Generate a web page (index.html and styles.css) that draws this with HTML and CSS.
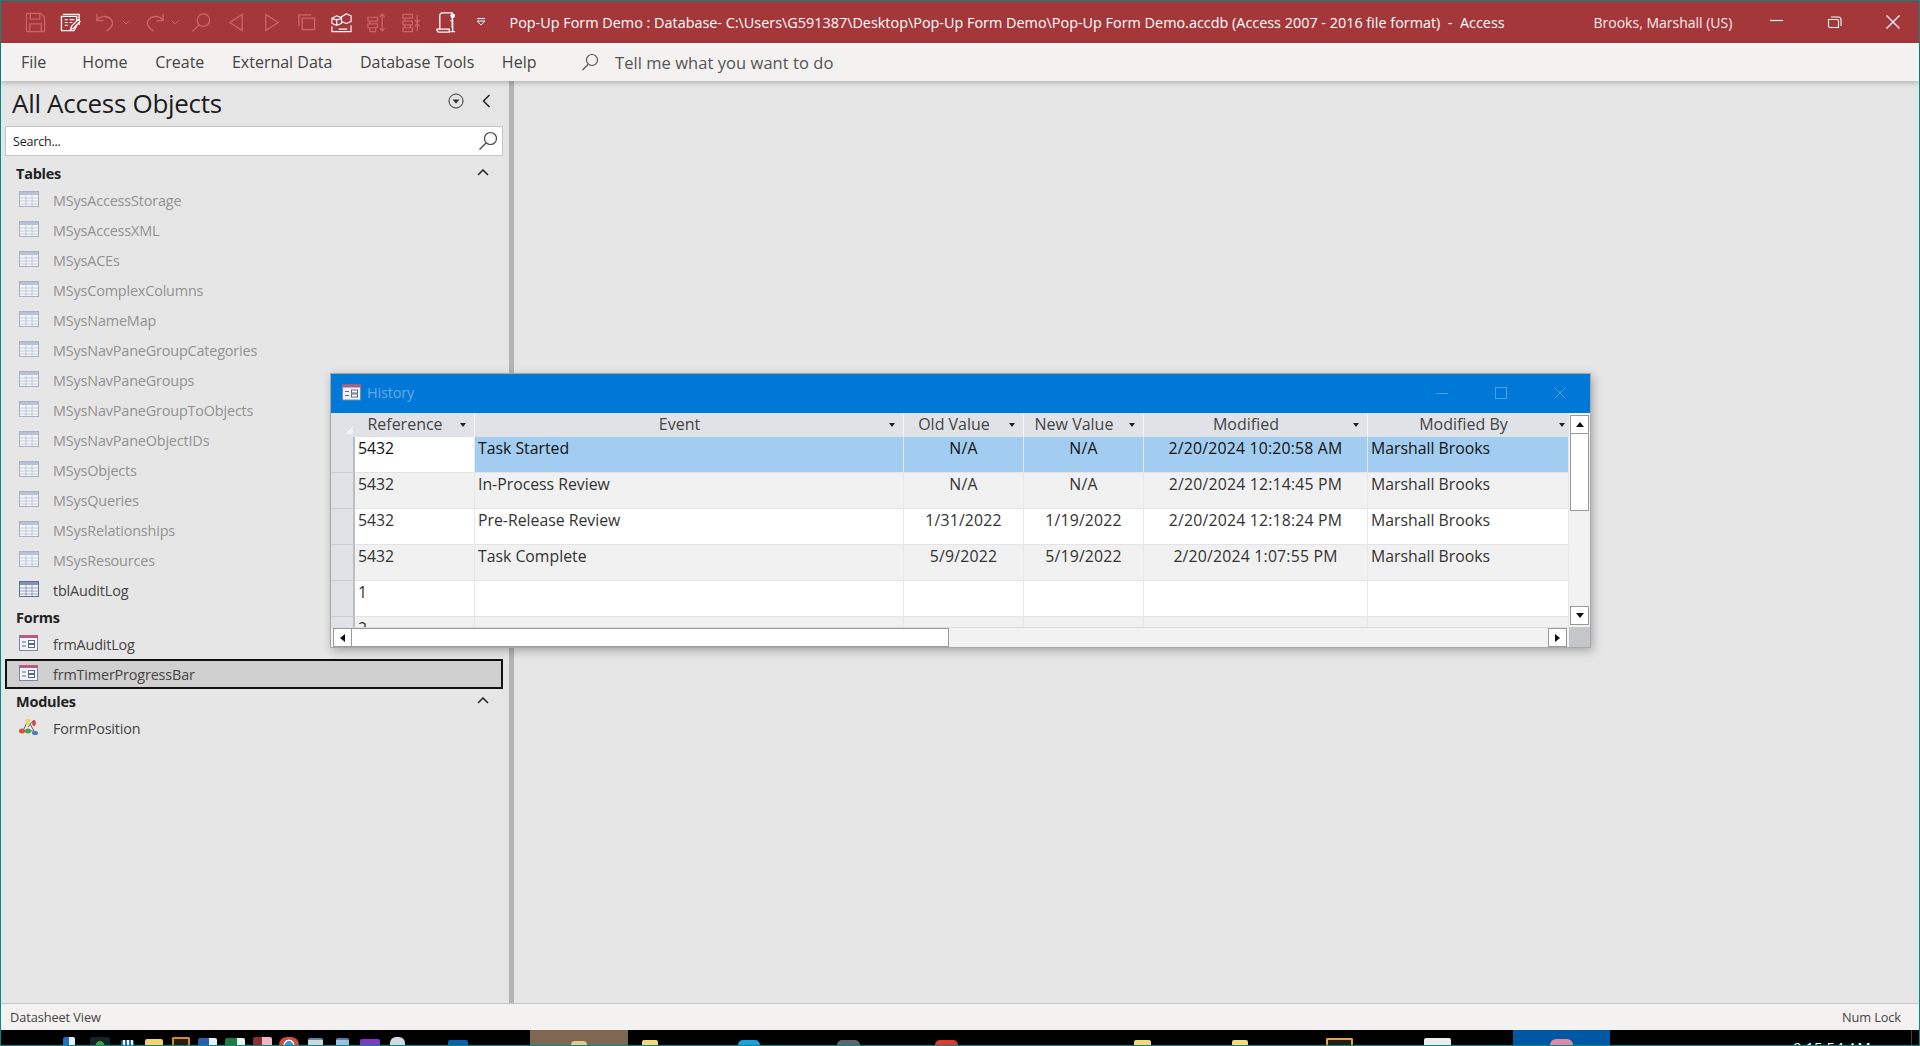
FILE: index.html
```html
<!DOCTYPE html>
<html lang="en">
<head>
<meta charset="utf-8">
<title>Access</title>
<link rel="stylesheet" href="styles.css">
</head>
<body>
<svg class="defs" width="0" height="0" aria-hidden="true">
  <symbol id="tbl" viewBox="0 0 20 16">
    <rect x="0.5" y="0.5" width="19" height="15" fill="#f4f6fa" stroke="currentColor"/>
    <rect x="1" y="1" width="18" height="3" fill="currentColor" opacity=".75"/>
    <path d="M1 7h18M1 10h18M1 13h18M7 4v11M13 4v11" stroke="currentColor" stroke-width="1" opacity=".6" fill="none"/>
  </symbol>
  <symbol id="frm" viewBox="0 0 20 16">
    <rect x="0.5" y="0.5" width="18" height="15" fill="#f2f5fb" stroke="#7b86a8"/>
    <rect x="1" y="0" width="18" height="3" fill="#b65c7c"/>
    <path d="M3 7h4M3 11h4" stroke="#56688f" fill="none"/>
    <rect x="9.500" y="5.500" width="6" height="3" fill="#fff" stroke="#56688f"/>
    <rect x="9.500" y="9.500" width="6" height="3" fill="#fff" stroke="#56688f"/>
  </symbol>
</svg>
<div class="app">
  <header class="titlebar">
    <div class="qat">
      <svg class="q dim" viewBox="0 0 22 22"><path d="M1.500 1.500h15l4 4v15h-19zM5.500 1.500v6h10v-6M5 20.500v-8h12v8" fill="none" stroke="currentColor" stroke-width="1.300"/></svg>
      <svg class="q" viewBox="0 0 22 22"><path d="M3 2.500h17v11M1.500 4.500h16v10l-3 5h-13z" fill="none" stroke="currentColor" stroke-width="1.400"/><path d="M5 8h3M10 8h5M5 11h3M10 11h3M5 14h3" stroke="currentColor" stroke-width="1.300"/><path d="M11 18l1-3 7-7 2 2-7 7z" fill="#a4373a" stroke="currentColor" stroke-width="1.300"/></svg>
      <svg class="q dim" viewBox="0 0 22 22"><path d="M2 2v7h7M2 9c3-5 11-6 15-1 3 4 1 8-5 12" fill="none" stroke="currentColor" stroke-width="1.400"/></svg>
      <svg class="c c-undo dim" viewBox="0 0 8 5"><path d="M.5.500l3.500 3.500L7.500.500" fill="none" stroke="currentColor"/></svg>
      <svg class="q dim" viewBox="0 0 22 22"><path d="M20 2v7h-7M20 9c-3-5-11-6-15-1-3 4-1 8 5 12" fill="none" stroke="currentColor" stroke-width="1.400"/></svg>
      <svg class="c c-redo dim" viewBox="0 0 8 5"><path d="M.5.500l3.500 3.500L7.500.500" fill="none" stroke="currentColor"/></svg>
      <svg class="q dim" viewBox="0 0 22 22"><circle cx="13" cy="8.500" r="6.500" fill="none" stroke="currentColor" stroke-width="1.400"/><path d="M8.500 13.500L1.500 20.500" stroke="currentColor" stroke-width="1.400"/></svg>
      <svg class="q dim" viewBox="0 0 22 22"><path d="M17 2.500v17L4 11z" fill="none" stroke="currentColor" stroke-width="1.400"/></svg>
      <svg class="q dim" viewBox="0 0 22 22"><path d="M5 2.500v17L18 11z" fill="none" stroke="currentColor" stroke-width="1.400"/></svg>
      <svg class="q dim" viewBox="0 0 22 22"><path d="M3 15V3h13M6.500 6.500h13v12h-13z" fill="none" stroke="currentColor" stroke-width="1.400"/></svg>
      <svg class="q" viewBox="0 0 22 22"><path d="M1 6.500l5-2.500 5 2v6l-5 2-5-2zM6 7v7M1 6.500l5 2 5-2M11 5l5-3 5 2v6l-5 2-5-2z" fill="none" stroke="currentColor" stroke-width="1.200"/><path d="M1 15v5.500h20V14M8 18h9" fill="none" stroke="currentColor" stroke-width="1.200"/></svg>
      <svg class="q dim" viewBox="0 0 22 22"><path d="M2 5.500h10v4H2zM4 9.500v3M2 12.500h10v4H2zM4 16.500v4h6v-4" fill="none" stroke="currentColor" stroke-width="1.300"/><path d="M17 2v18M14.500 5L17 2l2.500 3M14.500 17l2.500 3 2.500-3" fill="none" stroke="currentColor" stroke-width="1.300"/></svg>
      <svg class="q dim" viewBox="0 0 22 22"><path d="M2 2.500h10v4H2zM4 6.500v3M2 9.500h10v4H2zM4 13.500v3h6v-3M2 16.500h10v4H2z" fill="none" stroke="currentColor" stroke-width="1.300"/><path d="M17 3v8M14.500 8.500L17 11l2.500-2.500M17 12v8M14.500 15l2.500-3 2.500 3" fill="none" stroke="currentColor" stroke-width="1.300"/></svg>
      <svg class="q" viewBox="0 0 22 22"><path d="M4 18V3.500C4 2 5 1 6.500 1H17v16M1 18h13v3H3c-1 0-2-1-2-3z" fill="none" stroke="currentColor" stroke-width="1.400"/><circle cx="17.500" cy="4" r="2.500" fill="#fff"/><path d="M17.500 8v12M15 20.500h5M15 9h3" stroke="currentColor" stroke-width="1.300" fill="none"/></svg>
      <svg class="cust" viewBox="0 0 10 8"><path d="M1 .5h8M1 3l4 4 4-4z" fill="none" stroke="currentColor"/></svg>
    </div>
    <div class="doc">Pop-Up Form Demo : Database- C:\Users\G591387\Desktop\Pop-Up Form Demo\Pop-Up Form Demo.accdb (Access 2007 - 2016 file format)&nbsp; -&nbsp; Access</div>
    <div class="user">Brooks, Marshall (US)</div>
    <div class="winbtns">
      <svg viewBox="0 0 14 14"><path d="M0 5.500h13" stroke="currentColor" stroke-width="1.200"/></svg>
      <svg viewBox="0 0 14 14"><path d="M.5 4.500h8.500c1 0 1.500.5 1.500 1.500v6.500H2c-1 0-1.500-.5-1.500-1.500zM3 2h7c2 0 3 1 3 3v6" fill="none" stroke="currentColor" stroke-width="1.100"/></svg>
      <svg viewBox="0 0 14 14"><path d="M.5.500l13 13M13.500.500l-13 13" stroke="currentColor" stroke-width="1.200"/></svg>
    </div>
  </header>
  <nav class="ribbon">
    <span class="tab tab-file">File</span>
    <span class="tab">Home</span>
    <span class="tab">Create</span>
    <span class="tab">External Data</span>
    <span class="tab">Database Tools</span>
    <span class="tab">Help</span>
    <svg class="tell-ico" viewBox="0 0 18 18"><circle cx="11" cy="7" r="5.500" fill="none" stroke="currentColor" stroke-width="1.200"/><path d="M7 11.500L1.500 17" stroke="currentColor" stroke-width="1.200"/></svg>
    <span class="tell">Tell me what you want to do</span>
  </nav>
  <main class="work">
    <aside class="navpane">
      <div class="nav-head">
        <h1>All Access Objects</h1>
        <svg class="nav-drop" viewBox="0 0 16 16"><circle cx="8" cy="8" r="7" fill="none" stroke="currentColor"/><path d="M4.500 6.500h7L8 10.500z" fill="currentColor"/></svg>
        <svg class="nav-close" viewBox="0 0 9 14"><path d="M7.500 1L1.500 7l6 6" fill="none" stroke="currentColor" stroke-width="1.500"/></svg>
      </div>
      <div class="search">
        <span>Search...</span>
        <svg viewBox="0 0 20 20"><circle cx="12.500" cy="7.500" r="6" fill="none" stroke="currentColor" stroke-width="1.200"/><path d="M8 12L1.500 18.500" stroke="currentColor" stroke-width="1.200"/></svg>
      </div>
      <div class="group"><b>Tables</b><svg class="chev" viewBox="0 0 12 7"><path d="M1 6l5-5 5 5" fill="none" stroke="currentColor" stroke-width="1.500"/></svg></div>
      <ul class="items">
        <li class="sys"><svg class="ti"><use href="#tbl"/></svg>MSysAccessStorage</li>
        <li class="sys"><svg class="ti"><use href="#tbl"/></svg>MSysAccessXML</li>
        <li class="sys"><svg class="ti"><use href="#tbl"/></svg>MSysACEs</li>
        <li class="sys"><svg class="ti"><use href="#tbl"/></svg>MSysComplexColumns</li>
        <li class="sys"><svg class="ti"><use href="#tbl"/></svg>MSysNameMap</li>
        <li class="sys"><svg class="ti"><use href="#tbl"/></svg>MSysNavPaneGroupCategories</li>
        <li class="sys"><svg class="ti"><use href="#tbl"/></svg>MSysNavPaneGroups</li>
        <li class="sys"><svg class="ti"><use href="#tbl"/></svg>MSysNavPaneGroupToObjects</li>
        <li class="sys"><svg class="ti"><use href="#tbl"/></svg>MSysNavPaneObjectIDs</li>
        <li class="sys"><svg class="ti"><use href="#tbl"/></svg>MSysObjects</li>
        <li class="sys"><svg class="ti"><use href="#tbl"/></svg>MSysQueries</li>
        <li class="sys"><svg class="ti"><use href="#tbl"/></svg>MSysRelationships</li>
        <li class="sys"><svg class="ti"><use href="#tbl"/></svg>MSysResources</li>
        <li class="usr"><svg class="ti"><use href="#tbl"/></svg>tblAuditLog</li>
      </ul>
      <div class="group"><b>Forms</b></div>
      <ul class="items">
        <li><svg class="ti"><use href="#frm"/></svg>frmAuditLog</li>
        <li class="sel"><svg class="ti"><use href="#frm"/></svg>frmTimerProgressBar</li>
      </ul>
      <div class="group"><b>Modules</b><svg class="chev" viewBox="0 0 12 7"><path d="M1 6l5-5 5 5" fill="none" stroke="currentColor" stroke-width="1.500"/></svg></div>
      <ul class="items">
        <li><svg class="ti mod" viewBox="0 0 20 18"><path d="M8 4l-4 9M10 4l5 9M4 13h11M14 3l-5 6" stroke="#667" fill="none"/><ellipse cx="9" cy="3.500" rx="2.500" ry="3" fill="#e6d56a"/><ellipse cx="15" cy="5" rx="1.800" ry="3" fill="#cc4a3a"/><ellipse cx="3" cy="13" rx="3" ry="2.500" fill="#d9533c"/><ellipse cx="9" cy="13" rx="3" ry="2.500" fill="#4f9a55"/><ellipse cx="16" cy="15" rx="3" ry="2" fill="#4a78c4"/></svg>FormPosition</li>
      </ul>
    </aside>
    <div class="splitter"></div>
    <section class="canvas"></section>

    <div class="popup">
      <div class="pop-title">
        <svg class="pop-ico"><use href="#frm"/></svg>
        <span class="pop-name">History</span>
        <div class="pop-btns">
          <svg viewBox="0 0 14 14"><path d="M1 7.500h12" stroke="currentColor"/></svg>
          <svg viewBox="0 0 14 14"><rect x="1.500" y="1.500" width="11" height="11" fill="none" stroke="currentColor"/></svg>
          <svg viewBox="0 0 14 14"><path d="M1.500 1.500l11 11M12.500 1.500l-11 11" stroke="currentColor"/></svg>
        </div>
      </div>
      <div class="pop-body">
        <div class="sheet">
          <div class="grid">
            <div class="hd corner"><svg viewBox="0 0 12 11"><path d="M11 0L0 11h11z" fill="#eef1f5" stroke="#d3d8df"/></svg></div>
            <div class="hd"><span>Reference</span><i></i></div>
            <div class="hd"><span>Event</span><i></i></div>
            <div class="hd"><span>Old Value</span><i></i></div>
            <div class="hd"><span>New Value</span><i></i></div>
            <div class="hd"><span>Modified</span><i></i></div>
            <div class="hd hd-last"><span>Modified By</span><i></i></div>

            <div class="rs"></div><div class="cell ref cur">5432</div><div class="cell hi">Task Started</div><div class="cell hi ctr">N/A</div><div class="cell hi ctr">N/A</div><div class="cell hi ctr">2/20/2024 10:20:58 AM</div><div class="cell hi">Marshall Brooks</div>

            <div class="rs"></div><div class="cell ref alt">5432</div><div class="cell alt">In-Process Review</div><div class="cell alt ctr">N/A</div><div class="cell alt ctr">N/A</div><div class="cell alt ctr">2/20/2024 12:14:45 PM</div><div class="cell alt">Marshall Brooks</div>

            <div class="rs"></div><div class="cell ref">5432</div><div class="cell">Pre-Release Review</div><div class="cell ctr">1/31/2022</div><div class="cell ctr">1/19/2022</div><div class="cell ctr">2/20/2024 12:18:24 PM</div><div class="cell">Marshall Brooks</div>

            <div class="rs"></div><div class="cell ref alt">5432</div><div class="cell alt">Task Complete</div><div class="cell alt ctr">5/9/2022</div><div class="cell alt ctr">5/19/2022</div><div class="cell alt ctr">2/20/2024 1:07:55 PM</div><div class="cell alt">Marshall Brooks</div>

            <div class="rs"></div><div class="cell ref">1</div><div class="cell"></div><div class="cell"></div><div class="cell"></div><div class="cell"></div><div class="cell"></div>

            <div class="rs"></div><div class="cell ref alt">2</div><div class="cell alt"></div><div class="cell alt"></div><div class="cell alt"></div><div class="cell alt"></div><div class="cell alt"></div>
          </div>
        </div>
        <div class="vbar">
          <div class="sbtn"><em class="up"></em></div>
          <div class="vthumb"></div>
          <div class="vspace"></div>
          <div class="sbtn"><em class="down"></em></div>
        </div>
        <div class="hbar">
          <div class="sbtn"><em class="left"></em></div>
          <div class="hthumb"></div>
          <div class="hspace"></div>
          <div class="sbtn"><em class="right"></em></div>
        </div>
        <div class="sq"></div>
      </div>
    </div>
  </main>
  <footer class="status"><span>Datasheet View</span><span>Num Lock</span></footer>
  <div class="taskbar">
    <span class="tk tk-win"></span>
    <span class="tk tk-mongo"></span>
    <span class="tk tk-dots"></span>
    <span class="tk tk-folder"></span>
    <span class="tk tk-ppl"></span>
    <span class="tk tk-word"></span>
    <span class="tk tk-excel"></span>
    <span class="tk tk-acc"></span>
    <span class="tk tk-chrome"></span>
    <span class="tk tk-app1"></span>
    <span class="tk tk-app2"></span>
    <span class="tk tk-one"></span>
    <span class="tk tk-cyl"></span>
    <span class="tk tk-box"></span>
    <span class="active"><span class="tk tk-face"></span></span>
    <span class="tk tk-y1"></span>
    <span class="tk tk-edge"></span>
    <span class="tk tk-gray"></span>
    <span class="tk tk-red"></span>
    <span class="tk tk-y2"></span>
    <span class="tk tk-y3"></span>
    <span class="tk tk-org"></span>
    <span class="tk tk-white"></span>
    <span class="active blue"><span class="tk tk-pink"></span></span>
    <span class="clock">9:15:54 AM</span>
    <span class="tray-line"></span>
  </div>
</div>
</body>
</html>
```
FILE: styles.css
```css
* { box-sizing: border-box; }
html, body { margin: 0; height: 100%; overflow: hidden; }
body { font-family: "Open Sans", "Noto Sans", sans-serif; color: #222; }
.defs { position: absolute; }
.app {
  width: 1920px; height: 1046px; display: flex; flex-direction: column;
  border: 1px solid #008a8a; background: #e6e6e6;
}
.titlebar {
  height: 42px; flex: none; background: #a4373a; color: #fff;
  display: flex; align-items: center; padding-left: 23.500px;
}
.qat { display: flex; align-items: center; width: 485px; flex: none; color: #fff; }
.q { width: 21px; height: 21px; margin-right: 14px; flex: none; }
.c { width: 8px; height: 5px; margin-left: -8px; flex: none; }
.c-undo { margin-right: 14px; }
.c-redo { margin-right: 12px; }
.dim { color: #cf6468; }
.cust { width: 10px; height: 8px; margin-left: 5px; }
.doc { font-size: 14.400px; width: 1084px; flex: none; color: #fff; white-space: nowrap; }
.user { font-size: 14px; width: 170px; flex: none; white-space: nowrap; color: #fbeeee; }
.winbtns { display: flex; gap: 44px; margin-left: 6px; }
.winbtns svg { width: 14px; height: 14px; }
.ribbon {
  height: 38px; flex: none; background: #f3f2f1; display: flex; align-items: center;
  color: #444; font-size: 16px; box-shadow: 0 2px 5px rgba(0,0,0,.22);
  position: relative; z-index: 2; padding-left: 20px;
}
.tab { margin-right: 27.600px; white-space: nowrap; }
.tab-file { margin-right: 36px; }
.tell-ico { width: 18px; height: 18px; margin-left: 17px; color: #555; flex: none; }
.tell { margin-left: 16px; color: #555; font-size: 16.500px; letter-spacing: .05px; }
.work { flex: 1; display: flex; position: relative; min-height: 0; }
.navpane { width: 508px; flex: none; padding: 0 6px 0 4px; background: #e6e6e6; }
.nav-head { height: 45px; display: flex; align-items: center; padding-left: 7px; }
.nav-head h1 { margin: -2px 0 0; flex: 1; font-size: 26px; font-weight: 400; letter-spacing: -.3px; color: #1c1c1c; }
.nav-drop { width: 16px; height: 16px; color: #333; margin-right: 18px; margin-top: -6px; }
.nav-close { width: 9px; height: 14px; color: #222; margin-right: 12px; margin-top: -6px; }
.search {
  height: 30px; background: #fff; border: 1px solid #c4c4c4; display: flex; align-items: center;
  justify-content: space-between; padding: 0 4px 0 7px; font-size: 12.500px; letter-spacing: -.2px; color: #222;
  margin-bottom: 5px;
}
.search svg { width: 20px; height: 20px; color: #444; }
.group {
  height: 24px; display: flex; align-items: center; justify-content: space-between;
  padding: 0 14px 0 11px; font-size: 14.500px; letter-spacing: -.25px; color: #222;
}
.group b { font-weight: 700; }
.chev { width: 12px; height: 7px; color: #222; margin-top: -2px; }
.items { list-style: none; margin: 0; padding: 0; }
.items li {
  height: 30px; display: flex; align-items: center; padding-left: 14px;
  font-size: 14.400px; letter-spacing: -.16px; color: #444; white-space: nowrap;
}
.ti { width: 20px; height: 16px; margin-right: 14px; margin-top: -3px; flex: none; }
.items .sys { color: #929292; }
.sys .ti { color: #a6b0c8; }
.usr .ti { color: #5a6f9e; }
.items .sel { background: #d0d0d0; border: 2px solid #111; padding-left: 12px; color: #444; }
.mod { height: 18px; }
.splitter { width: 5px; flex: none; background: #b4b4b4; }
.canvas { flex: 1; background: #e6e6e6; }
.popup {
  position: absolute; left: 329px; top: 292px; width: 1261px; height: 275px;
  border: 1px solid #a8a8a8; background: #f2f2f2; display: flex; flex-direction: column;
  box-shadow: 2px 3px 9px rgba(0,0,0,.28); z-index: 3;
}
.pop-title {
  height: 39px; flex: none; background: #0078d7; display: flex; align-items: center;
  padding: 0 0 2px 11px; color: #7fb8e8;
}
.pop-ico { width: 20px; height: 17px; flex: none; }
.pop-name { margin-left: 5px; font-size: 14.500px; letter-spacing: -.2px; color: #68a9e3; flex: 1; }
.pop-btns { display: flex; gap: 45px; margin-right: 23px; }
.pop-btns svg { width: 14px; height: 14px; color: #4f9ee0; }
.pop-body {
  flex: 1; display: grid; grid-template-columns: 1fr 21px; grid-template-rows: 214px 20px; min-height: 0;
}
.sheet { overflow: hidden; background: #fff; }
.grid {
  display: grid;
  grid-template-columns: 24px 120px 429px 120px 120px 224px 201px;
  grid-template-rows: 24px repeat(6, 36px);
  font-size: 15.800px;
}
.hd {
  background: #dfe2e7; display: flex; align-items: center; justify-content: center; position: relative;
  color: #444; border-right: 1px solid #f3f4f6; font-size: 16px; padding: 0 19px 3px 0;
}
.hd-last { border-right: 0; padding-right: 10px; }
.hd i { position: absolute; right: 8px; top: 10px; border: 3.500px solid transparent; border-top: 4px solid #222; border-bottom: 0; }
.hd-last i { right: 4px; }
.corner { justify-content: flex-end; border-right: 0; padding: 8px 0 0; }
.corner svg { width: 12px; height: 11px; }
.rs { background: #dfe2e7; border-bottom: 1px solid #c9ccd1; border-right: 2px solid #b9bdc4; }
.cell {
  background: #fff; color: #333; padding: 1px 3px 0; white-space: nowrap;
  border-right: 1px solid #e8e8e8; border-bottom: 1px solid #e4e4e4; line-height: 20px;
}
.alt { background: #f1f1f1; }
.hi { background: #a3cdf0; color: #111; }
.cur { color: #111; }
.ctr { text-align: center; letter-spacing: .2px; }
.vbar { background: #f2f2f2; display: flex; flex-direction: column; padding: 2px 1px; }
.sbtn { width: 19px; height: 19px; flex: none; background: #fff; border: 1px solid #9a9a9a; display: flex; align-items: center; justify-content: center; }
.sbtn em { display: block; border: 4px solid transparent; }
.sbtn .up { border-bottom: 5px solid #111; border-top: 0; }
.sbtn .down { border-top: 5px solid #111; border-bottom: 0; }
.sbtn .left { border-right: 5px solid #111; border-left: 0; }
.sbtn .right { border-left: 5px solid #111; border-right: 0; }
.vthumb { height: 77px; background: #fff; border: 1px solid #9a9a9a; border-top: 0; flex: none; }
.vspace { flex: 1; }
.hbar { background: #f2f2f2; display: flex; align-items: center; padding: 0 2px; border-top: 1px solid #dcdcdc; }
.hthumb { width: 597px; height: 19px; background: #fff; border: 1px solid #9a9a9a; border-left: 0; flex: none; }
.hspace { flex: 1; }
.sq { background: #c4c6c9; }
.status {
  height: 27px; flex: none; background: #f3f2f1; border-top: 1px solid #c8c8c8;
  display: flex; align-items: center; justify-content: space-between; padding: 0 18px 0 9px;
  font-size: 12.800px; letter-spacing: -.1px; color: #444;
}
.taskbar { height: 15px; flex: none; background: #000; display: flex; align-items: flex-end; overflow: hidden; }
.tk { display: block; height: 7px; flex: none; border-radius: 2px 2px 0 0; }
.tk-win { width: 12px; height: 8px; margin-left: 62px; background: linear-gradient(90deg, #1f6fc4 50%, #e8f0f8 50%); }
.tk-mongo { width: 20px; margin-left: 15px; height: 8px; background: radial-gradient(circle at 50% 100%, #3fa037 30%, #19242a 32%); }
.tk-dots { width: 13px; margin-left: 11px; height: 5px; background: repeating-linear-gradient(90deg, #2b62c9 0 2px, #fff 2px 4px); }
.tk-folder { width: 18px; margin-left: 11px; height: 6px; background: #f6d26a; }
.tk-ppl { width: 18px; margin-left: 9px; height: 8px; background: #2a1d10; border: 2px solid #d58a2b; border-bottom: 0; }
.tk-word { width: 19px; margin-left: 8px; background: linear-gradient(90deg, #2d5fa8 60%, #e8f0f8 60%); }
.tk-excel { width: 20px; margin-left: 8px; background: linear-gradient(90deg, #1f7a45 60%, #e8f5ec 60%); }
.tk-acc { width: 19px; margin-left: 8px; height: 8px; background: linear-gradient(90deg, #8e2c33 45%, #f0b8c0 45%); }
.tk-chrome { width: 20px; margin-left: 7px; height: 8px; border-radius: 10px 10px 0 0; background: radial-gradient(circle at 50% 100%, #4a8fe8 30%, #fff 32%, #fff 42%, #db4a3a 44%); }
.tk-app1 { width: 15px; margin-left: 9px; background: #cfd8dd; border-top: 2px solid #5d86a8; }
.tk-app2 { width: 13px; margin-left: 13px; background: #9ec0e0; border-top: 2px solid #5d7ea0; }
.tk-one { width: 20px; margin-left: 11px; height: 6px; background: #7d3bc0; }
.tk-cyl { width: 15px; margin-left: 10px; height: 8px; background: #cfdbe0; border-radius: 6px 6px 0 0; }
.tk-box { width: 20px; margin-left: 43px; height: 5px; background: #0c5fa8; }
.active { display: flex; justify-content: center; align-items: flex-end; width: 98px; height: 100%; background: #7f6751; margin-left: 62px; flex: none; }
.tk-face { width: 16px; height: 4px; background: #e8c98a; border-radius: 8px 8px 0 0; }
.tk-y1 { width: 16px; margin-left: 14px; height: 5px; background: #f6d878; }
.tk-edge { width: 22px; margin-left: 80px; height: 5px; background: #1e9fe0; border-radius: 10px 10px 0 0; }
.tk-gray { width: 23px; margin-left: 77px; height: 5px; background: #60656a; border-radius: 12px 12px 0 0; }
.tk-red { width: 23px; margin-left: 75px; height: 5px; background: #e03a30; border-radius: 12px 12px 0 0; }
.tk-y2 { width: 17px; margin-left: 176px; height: 5px; background: #f6d878; }
.tk-y3 { width: 16px; margin-left: 81px; height: 5px; background: #f6d878; }
.tk-org { width: 27px; margin-left: 78px; height: 7px; background: #2a1d10; border: 2px solid #e8a33a; border-bottom: 0; }
.tk-white { width: 27px; margin-left: 71px; height: 7px; background: #ededed; }
.blue { background: #0058a3; margin-left: 62px; width: 97px; }
.tk-pink { width: 23px; height: 6px; background: #e08aa8; border-radius: 12px 12px 0 0; }
.clock { color: #fff; font-size: 15px; line-height: 16px; height: 6px; overflow: hidden; margin-left: 183px; white-space: nowrap; align-self: flex-end; width: 92px; }
.tray-line { width: 1px; height: 100%; background: #444; margin-left: 26px; flex: none; }
```
